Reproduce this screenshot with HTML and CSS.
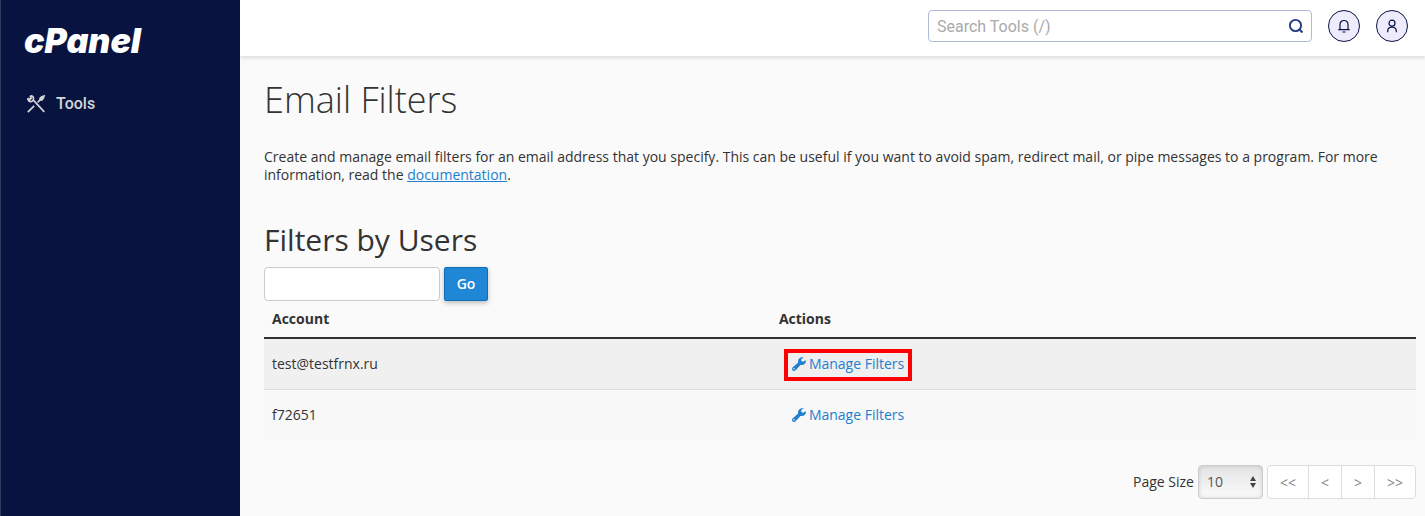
FILE: index.html
```html
<!DOCTYPE html>
<html lang="en">
<head>
    <meta charset="UTF-8">
    <meta name="viewport" content="width=device-width, initial-scale=1.0">
    <title>cPanel - Email Filters</title>
    <link rel="stylesheet" href="styles.css">
</head>
<body>
    <!-- Sidebar -->
    <aside class="sidebar">
        <a class="logo" href="#">cPanel</a>
        <nav>
            <a class="nav-link" href="#">
                <svg width="20" height="20" viewBox="0 0 20 20" fill="none" stroke="currentColor" stroke-width="1.7">
                    <path d="M4.200 1.800C6.500 1.500 8.300 3.500 7.300 6L18.300 17.800M1.900 4.200C1.600 6.600 3.600 8.300 6 7.300L7.300 6M1.900 4.200 4 5.500 5.200 4.200 4.200 1.800"/>
                    <path d="M1.800 18.200 8.200 11.800M11.600 8.400 14 6"/>
                    <path d="M14 6C13.600 4.300 15.500 2.600 18 2C17.400 4.500 15.700 6.400 14 6Z" fill="currentColor"/>
                </svg>
                <span>Tools</span>
            </a>
        </nav>
    </aside>

    <div class="main">
        <!-- Top bar -->
        <header class="topbar">
            <form class="search">
                <input type="text" class="search-input" placeholder="Search Tools (/)" aria-label="Search Tools">
                <button type="submit" class="search-btn" aria-label="Search">
                    <svg width="16" height="16" viewBox="0 0 16 16" fill="none" stroke="currentColor" stroke-width="1.9">
                        <circle cx="7.500" cy="7.500" r="5.600"/>
                        <path d="M11.500 11.500 14.500 14.500"/>
                    </svg>
                </button>
            </form>
            <button type="button" class="round-btn" aria-label="Notifications">
                <svg width="16" height="16" viewBox="0 0 16 16" fill="none" stroke="currentColor" stroke-width="1.2">
                    <path d="M2.300 11.700H13.700M4 11.700V6.700C4 1.100 12 1.100 12 6.700V11.700M6.400 14H9.600"/>
                </svg>
            </button>
            <button type="button" class="round-btn" aria-label="User menu">
                <svg width="16" height="16" viewBox="0 0 16 16" fill="none" stroke="currentColor" stroke-width="1.2">
                    <circle cx="8" cy="5.200" r="3"/>
                    <path d="M3.700 14.200V13C3.700 7.700 12.300 7.700 12.300 13V14.200"/>
                </svg>
            </button>
        </header>

        <!-- Page content -->
        <main class="content">
            <h1>Email Filters</h1>
            <p class="description">Create and manage email filters for an email address that you specify. This can be useful if you want to avoid spam, redirect mail, or pipe messages to a program. For more information, read the <a href="#">documentation</a>.</p>

            <h2>Filters by Users</h2>
            <form class="filter-form">
                <input type="text" class="filter-input" aria-label="Search users">
                <button type="submit" class="btn-primary">Go</button>
            </form>

            <table class="accounts">
                <thead>
                    <tr>
                        <th class="col-account">Account</th>
                        <th>Actions</th>
                    </tr>
                </thead>
                <tbody>
                    <tr>
                        <td>test@testfrnx.ru</td>
                        <td>
                            <a class="btn-link highlight" href="#">
                                <svg width="14" height="14" viewBox="0 0 14 14" fill="currentColor">
                                    <path d="M13.800 3.300 11 4.800 9.300 3.900V2L11.800.500C9.500-.500 6.200.900 6 4.200L6.200 5.500.500 10.600C-1 12.700 1.300 15 3.400 13.500L8.500 7.900C11.200 8.900 14.600 6.400 13.800 3.300ZM2.500 11.300A.7.7 0 1 1 1.500 12.300.7.7 0 0 1 2.500 11.300Z"/>
                                </svg>
                                Manage Filters
                            </a>
                        </td>
                    </tr>
                    <tr>
                        <td>f72651</td>
                        <td>
                            <a class="btn-link" href="#">
                                <svg width="14" height="14" viewBox="0 0 14 14" fill="currentColor">
                                    <path d="M13.800 3.300 11 4.800 9.300 3.900V2L11.800.500C9.500-.500 6.200.900 6 4.200L6.200 5.500.500 10.600C-1 12.700 1.300 15 3.400 13.500L8.500 7.900C11.200 8.900 14.600 6.400 13.800 3.300ZM2.500 11.300A.7.7 0 1 1 1.500 12.300.7.7 0 0 1 2.500 11.300Z"/>
                                </svg>
                                Manage Filters
                            </a>
                        </td>
                    </tr>
                </tbody>
            </table>

            <!-- Pagination -->
            <div class="pagination">
                <label for="pageSize">Page Size</label>
                <div class="select-wrap">
                    <select id="pageSize" name="pageSize">
                        <option>10</option>
                        <option>20</option>
                        <option>50</option>
                        <option>100</option>
                    </select>
                    <svg class="select-arrows" width="8" height="14" viewBox="0 0 8 14" fill="currentColor">
                        <path d="M4 1 7 6H1ZM4 13 1 8H7Z"/>
                    </svg>
                </div>
                <div class="pager">
                    <button type="button">&lt;&lt;</button>
                    <button type="button">&lt;</button>
                    <button type="button">&gt;</button>
                    <button type="button">&gt;&gt;</button>
                </div>
            </div>
        </main>
    </div>
</body>
</html>
```
FILE: styles.css
```css
/* General */
* {
    box-sizing: border-box;
}

body {
    margin: 0;
    display: flex;
    min-height: 100vh;
    background-color: #fafafa;
    color: #333;
    font-family: "Open Sans", sans-serif;
    font-size: 14px;
    line-height: 18px;
}

input,
select,
button {
    font-family: inherit;
    font-size: 14px;
}

svg {
    flex: none;
}

a {
    color: #2180ce;
}

/* Sidebar */
.sidebar {
    flex: none;
    width: 240px;
    padding: 21px 24px 21px 23px;
    background-color: #08143f;
    border-left: 1px solid #303a5c;
}

.logo {
    display: block;
    color: #fff;
    font-family: Inter, sans-serif;
    font-size: 34px;
    font-style: italic;
    font-weight: 900;
    line-height: 40px;
    text-decoration: none;
}

.nav-link {
    display: flex;
    align-items: center;
    gap: 10px;
    margin-top: 32px;
    padding-left: 2px;
    color: #d5d5d5;
    font-family: Roboto, sans-serif;
    font-size: 16px;
    font-weight: 500;
    line-height: 22px;
    text-decoration: none;
}

/* Top bar */
.main {
    flex: 1;
    min-width: 0;
}

.topbar {
    display: flex;
    justify-content: flex-end;
    gap: 16px;
    height: 56px;
    padding: 10px 17px;
    background-color: #fff;
    box-shadow: 0 2px 4px rgba(0, 0, 0, 0.12);
}

.search {
    display: flex;
    width: 384px;
    height: 32px;
    border: 1px solid #b0b9d5;
    border-radius: 4px;
    background-color: #fff;
}

.search-input {
    flex: 1;
    min-width: 0;
    padding: 0 8px;
    border: none;
    background: none;
    font-family: Roboto, sans-serif;
    font-size: 16px;
}

.search-input::placeholder {
    color: #aaa;
}

.search-btn {
    display: flex;
    align-items: center;
    padding: 0 7px;
    border: none;
    background: none;
    color: #213a80;
}

.round-btn {
    display: flex;
    align-items: center;
    justify-content: center;
    width: 32px;
    height: 32px;
    padding: 0;
    border: 1px solid #08143f;
    border-radius: 50%;
    background-color: #eeebfc;
    color: #08143f;
}

/* Content */
.content {
    padding: 24px 9px 16px 24px;
}

h1 {
    margin: 0 0 28px;
    font-size: 36px;
    font-weight: 300;
    line-height: 40px;
}

.description {
    margin: 0 0 36px;
}

h2 {
    margin: 0 0 7px;
    font-size: 30px;
    font-weight: 400;
    line-height: 40px;
}

.filter-form {
    display: flex;
    gap: 4px;
}

.filter-input {
    width: 176px;
    height: 34px;
    padding: 6px 12px;
    border: 1px solid #ccc;
    border-radius: 4px;
    background-color: #fff;
}

.btn-primary {
    width: 44px;
    height: 34px;
    padding: 0 0 2px;
    border: 1px solid #0f6db8;
    border-radius: 2px;
    background-color: #2087d6;
    box-shadow: 0 2px 5px rgba(0, 0, 0, 0.25);
    color: #fff;
    font-weight: 600;
}

/* Accounts table */
.accounts {
    width: 100%;
    border-collapse: separate;
    border-spacing: 0;
}

.accounts th {
    padding: 9px 8px;
    border-bottom: 2px solid #333;
    font-weight: 700;
    text-align: left;
}

.accounts td {
    padding: 8px;
    background-color: #f8f8f8;
}

.accounts tbody tr:first-child td {
    background-color: #f0f0f0;
    border-bottom: 1px solid #ddd;
}

.col-account {
    width: 44%;
}

.btn-link {
    position: relative;
    display: inline-flex;
    align-items: center;
    gap: 3px;
    height: 34px;
    padding: 0 13px;
    text-decoration: none;
    vertical-align: top;
}

.highlight::after {
    content: "";
    position: absolute;
    inset: 2px 5px 0;
    border: 4px solid #f00;
}

/* Pagination */
.pagination {
    display: flex;
    align-items: center;
    justify-content: flex-end;
    gap: 4px;
    margin-top: 25px;
}

.select-wrap {
    position: relative;
}

.select-wrap select {
    display: block;
    width: 65px;
    height: 34px;
    padding: 0 8px 2px;
    appearance: none;
    border: 1px solid #ccc;
    border-radius: 4px;
    background: linear-gradient(#e4e4e4, #fafafa);
    box-shadow: inset 0 0 4px rgba(0, 0, 0, 0.15);
    color: #555;
}

.select-arrows {
    position: absolute;
    top: 10px;
    right: 6px;
    color: #444;
    pointer-events: none;
}

.pager {
    display: flex;
    border: 1px solid #ddd;
    border-radius: 4px;
    background-color: #fff;
}

.pager button {
    height: 32px;
    padding: 0 12px;
    border: none;
    background: none;
    color: #888;
}

.pager button + button {
    border-left: 1px solid #ddd;
}
```
